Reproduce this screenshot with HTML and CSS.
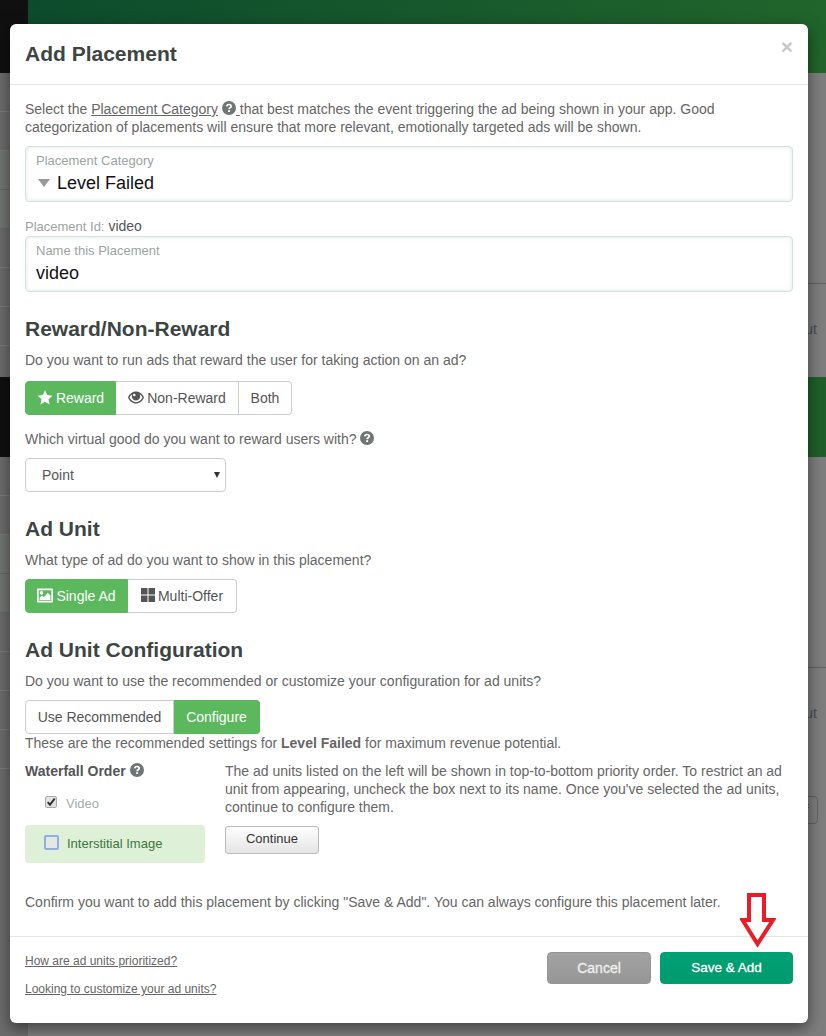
FILE: index.html
```html
<!DOCTYPE html>
<html lang="en">
<head>
<meta charset="utf-8">
<title>Add Placement</title>
<link rel="stylesheet" href="styles.css">
</head>
<body>
<div class="page">
  <div class="band band-top"><div class="band-side"></div><div class="band-main"></div></div>
  <div class="rows">
    <div class="side"><div class="r"></div><div class="r"></div><div class="r lite"></div><div class="r lite"></div><div class="r"></div><div class="r"></div><div class="r"></div></div>
    <div class="rowline"></div>
    <div class="row-text">ut</div>
  </div>
  <div class="band band-mid"><div class="band-side"></div><div class="band-main"></div></div>
  <div class="rows rows-two">
    <div class="side"><div class="r"></div><div class="r"></div><div class="r lite"></div><div class="r lite"></div><div class="r"></div><div class="r"></div><div class="r"></div><div class="r"></div></div>
    <div class="rowline"></div>
    <div class="row-text">ut</div>
    <div class="ghost-btn">f</div>
  </div>
</div>

<div class="modal">
  <header class="modal-head">
    <h1>Add Placement</h1>
    <span class="close">×</span>
  </header>
  <main class="modal-body">
    <p class="intro">Select the <a class="tip">Placement Category</a> <svg class="help" viewBox="0 0 14 14"><use href="#q"/></svg><a class="tip">&nbsp;</a>that best matches the event triggering the ad being shown in your app. Good categorization of placements will ensure that more relevant, emotionally targeted ads will be shown.</p>

    <div class="field field-cat">
      <label>Placement Category</label>
      <div class="value"><span class="tri"></span>Level Failed</div>
    </div>

    <div class="id-line"><span>Placement Id:</span> video</div>
    <div class="field">
      <label>Name this Placement</label>
      <div class="value">video</div>
    </div>

    <h2 class="h-reward">Reward/Non-Reward</h2>
    <p class="q">Do you want to run ads that reward the user for taking action on an ad?</p>
    <div class="group group-first">
      <button class="on w-reward"><svg class="ico" viewBox="0 0 16 16"><path d="M8 .2l2.300 5.200 5.700.6-4.300 3.800 1.200 5.600L8 12.500l-4.900 2.900 1.200-5.600L0 6l5.700-.6z"/></svg> Reward</button>
      <button class="w-non"><svg class="ico" viewBox="0 0 16 14"><path fill-rule="evenodd" d="M8 1c3.600 0 6.600 2.400 8 6-1.400 3.600-4.400 6-8 6S1.400 10.600 0 7c1.400-3.600 4.400-6 8-6zM1.500 7c1.200 2.700 3.700 4.700 6.500 4.700s5.300-2 6.500-4.700c-.7-1.500-1.700-2.700-3-3.500.4.700.7 1.500.7 2.300 0 2.400-1.900 4.300-4.200 4.300S3.800 8.200 3.800 5.800c0-.8.300-1.600.7-2.300-1.300.8-2.300 2-3 3.500zM6.300 3.200a1.300 1.300 0 1 0 0 2.600 1.300 1.300 0 0 0 0-2.600z"/></svg> Non-Reward</button>
      <button class="w-both">Both</button>
    </div>
    <p class="q q-good">Which virtual good do you want to reward users with? <svg class="help" viewBox="0 0 14 14"><use href="#q"/></svg></p>
    <div class="select-wrap"><select class="good"><option>Point</option></select></div>

    <h2 class="h-unit">Ad Unit</h2>
    <p class="q">What type of ad do you want to show in this placement?</p>
    <div class="group">
      <button class="on w-single"><svg class="ico" viewBox="0 0 16 14"><path fill-rule="evenodd" d="M.8 0h14.400a.8.800 0 0 1 .8.800v12.400a.8.800 0 0 1-.8.800H.8a.8.800 0 0 1-.8-.8V.8A.8.800 0 0 1 .8 0zm.9 1.700v10.600h12.600V1.700zM4.500 2.600a1.800 1.800 0 1 1 0 3.600 1.800 1.800 0 0 1 0-3.600zM2.600 11.400V9.200l2.400-2 1.800 1.500 4-4.500 2.600 2.800v4.400z"/></svg> Single Ad</button>
      <button class="w-multi"><svg class="ico ico-grid" viewBox="0 0 14 14"><path d="M0 0h6.500v6.500H0zM7.500 0H14v6.500H7.500zM0 7.500h6.500V14H0zM7.500 7.500H14V14H7.500z"/></svg> Multi-Offer</button>
    </div>

    <h2 class="h-config">Ad Unit Configuration</h2>
    <p class="q">Do you want to use the recommended or customize your configuration for ad units?</p>
    <div class="group">
      <button class="w-use">Use Recommended</button>
      <button class="on w-conf">Configure</button>
    </div>
    <p class="rec">These are the recommended settings for <b>Level Failed</b> for maximum revenue potential.</p>

    <div class="water">
      <div class="water-left">
        <div class="water-title"><b>Waterfall Order</b> <svg class="help" viewBox="0 0 14 14"><use href="#q"/></svg></div>
        <div class="unit unit-video">
          <span class="check"><svg viewBox="0 0 12 12"><path d="M2 6.200l2.800 3L10.500 1.800" fill="none" stroke="#333" stroke-width="2.400"/></svg></span>
          <span>Video</span>
        </div>
        <div class="unit unit-image">
          <span class="check check-focus"></span>
          <span>Interstitial Image</span>
        </div>
      </div>
      <div class="water-right">
        <p>The ad units listed on the left will be shown in top-to-bottom priority order. To restrict an ad unit from appearing, uncheck the box next to its name. Once you've selected the ad units, continue to configure them.</p>
        <button class="continue">Continue</button>
      </div>
    </div>

    <p class="confirm">Confirm you want to add this placement by clicking "Save &amp; Add". You can always configure this placement later.</p>
  </main>
  <footer class="modal-foot">
    <div class="links">
      <a>How are ad units prioritized?</a>
      <a>Looking to customize your ad units?</a>
    </div>
    <div class="actions">
      <button class="cancel">Cancel</button>
      <button class="save">Save &amp; Add</button>
    </div>
  </footer>
  <svg class="arrow" viewBox="0 0 36 56"><path d="M9 2h15v25h9L17.500 51 2.500 27H9z" fill="#fff" stroke="#ed1c24" stroke-width="4"/></svg>
</div>

<svg class="defs" width="0" height="0">
  <symbol id="q" viewBox="0 0 14 14">
    <circle cx="7" cy="7" r="7" fill="#6f7675"/>
    <path d="M4.800 5.400C4.900 4.100 5.800 3.500 7 3.500s2.200.7 2.200 1.800c0 1.500-2.100 1.500-2.100 3" fill="none" stroke="#fff" stroke-width="1.700"/>
    <rect x="6.100" y="9.200" width="2" height="1.800" fill="#fff"/>
  </symbol>
</svg>
</body>
</html>
```
FILE: styles.css
```css
* { box-sizing: border-box; }
html, body { margin: 0; height: 100%; }
body {
  background: #7e7e7e;
  font-family: "Liberation Sans", Arial, sans-serif;
  font-size: 14px;
  line-height: 18px;
  color: #666;
  overflow: hidden;
}

/* dimmed page behind the dialog */
.page { height: 1036px; display: flex; flex-direction: column; }
.band { display: flex; height: 73px; flex: none; }
.band-side { width: 28px; background: #101010; }
.band-main { flex: 1; background: linear-gradient(100deg, #0c4c2d, #22652b); }
.band-mid { height: 80px; }
.band-mid .band-main { background: #1f5f29; }
.rows { height: 304px; position: relative; flex: none; color: #444d55; }
.rows-two { height: 579px; }
.side { width: 28px; height: 100%; background: #6c6c6c; }
.r { height: 39px; border-bottom: 1px solid #7b7b7b; }
.r.lite { background: #727672; border-bottom-color: #666a66; }
.rowline { position: absolute; left: 808px; right: 0; top: 210px; border-top: 1px solid #636363; }
.row-text { position: absolute; right: 9px; top: 247px; }
.ghost-btn {
  position: absolute; left: 790px; top: 339px; width: 28px; height: 28px;
  border: 1px solid #636363; border-radius: 4px; color: #444d55;
  text-align: right; padding: 4px 8px 0 0;
}

/* dialog */
.modal {
  position: absolute; left: 10px; top: 24px; width: 798px; height: 999px;
  background: #fff; border-radius: 6px; box-shadow: 0 5px 15px rgba(0,0,0,.5);
  display: flex; flex-direction: column;
}
.modal-head {
  height: 61px; flex: none; border-bottom: 1px solid #e5e5e5;
  padding: 0 15px; position: relative;
}
.modal-head h1 { margin: 0; font-size: 21px; line-height: 60px; color: #3c4544; }
.close {
  position: absolute; right: 15px; top: 11px;
  font-size: 21px; line-height: 24px; font-weight: 700; color: #c8c8c8;
}
.modal-body { flex: 1; padding: 15px 15px 0; }
.modal-body p { margin: 0; }
.tip { color: #666; text-decoration: underline; }
.help { width: 14px; height: 14px; vertical-align: -1px; }
.defs { position: absolute; }

.field {
  height: 56px; border: 1px solid #d3e0dc; border-radius: 4px;
  padding: 5px 10px 0; box-shadow: inset 0 0 4px rgba(120,170,150,.25);
}
.field-cat { margin-top: 10px; }
.field label { display: block; font-size: 13px; line-height: 18px; color: #9aa3a1; }
.value { font-size: 18px; line-height: 24px; margin-top: 1px; color: #111; display: flex; align-items: center; }
.tri {
  width: 0; height: 0; margin: 0 7px 0 2px;
  border-left: 6px solid transparent; border-right: 6px solid transparent;
  border-top: 8px solid #999;
}
.id-line { margin-top: 15px; height: 18px; margin-bottom: 1px; color: #555; }
.id-line span { color: #9aa3a1; font-size: 13px; }

h2 { margin: 0; font-size: 21px; line-height: 24px; color: #3c4544; }
.h-reward, .h-unit, .h-config { margin-top: 25px; }
.modal-body .q { margin-top: 10px; }
.modal-body .q-good { margin-top: 15px; }

.group { display: flex; margin-top: 10px; height: 34px; }
.group-first { margin-top: 12px; }
.group button {
  font: inherit; color: #555; background: #fff; padding: 0;
  border: 1px solid #ccc; border-left-width: 0; height: 34px;
  display: flex; align-items: center; justify-content: center; gap: 3px;
}
.group button:first-child { border-left-width: 1px; border-radius: 4px 0 0 4px; }
.group button:last-child { border-radius: 0 4px 4px 0; }
.group button.on { background: #5cb85c; border-color: #5cb85c; color: #fff; }
.ico { width: 16px; height: 15px; fill: currentColor; flex: none; margin-top: -2px; }
.ico-grid { width: 14px; height: 14px; }
.w-reward { width: 91px; }
.w-non { width: 123px; }
.w-both { width: 53px; }
.w-single { width: 103px; }
.w-multi { width: 109px; }
.w-use { width: 149px; }
.w-conf { width: 86px; }

.select-wrap { position: relative; width: 201px; margin-top: 10px; }
.select-wrap::after {
  content: ""; position: absolute; right: 6px; top: 14px;
  border-left: 3.500px solid transparent; border-right: 3.500px solid transparent;
  border-top: 6px solid #333;
}
.good {
  display: block; width: 100%; height: 34px; appearance: none;
  font: inherit; color: #555; background: #fff;
  border: 1px solid #ccc; border-radius: 4px; padding: 0 16px;
}
.rec { line-height: 18px; }

.water { display: flex; margin-top: 10px; }
.water-left { width: 200px; flex: none; }
.water-title { height: 18px; color: #555; }
.unit { display: flex; align-items: center; gap: 9px; padding-left: 20px; width: 180px; font-size: 13px; }
.unit-video { height: 18px; margin-top: 15px; margin-bottom: -1px; color: #a3abab; }
.unit-image {
  height: 38px; margin-top: 13px; border-radius: 4px;
  background: #dff0d8; color: #3c763d;
}
.check {
  width: 12px; height: 12px; flex: none; display: block;
  border: 1px solid #aaa; border-radius: 2px; background: #e2e2e2;
  margin-top: -5px;
}
.check svg { display: block; width: 10px; height: 10px; }
.check-focus {
  width: 15px; height: 15px; border: 2px solid #8fb0de; background: #e4e8e4;
  margin: -3px -1px 0 -1px;
}
.water-right { flex: 1; }
.continue {
  display: block; margin-top: 10px; width: 94px; height: 28px; padding: 0 0 2px;
  font: inherit; font-size: 13px; color: #333; border: 1px solid #bbb; border-radius: 3px;
  background: linear-gradient(#fff, #e4e4e4);
}
.modal-body .confirm { margin-top: 30px; }

.modal-foot {
  height: 87px; flex: none; border-top: 1px solid #e5e5e5;
  padding: 15px 15px 0; display: flex; justify-content: space-between;
}
.links { display: flex; flex-direction: column; gap: 10px; font-size: 12px; }
.links a { color: #666; text-decoration: underline; line-height: 18px; }
.actions { display: flex; gap: 9px; height: 32px; }
.actions button {
  font: inherit; color: #fff; padding: 0;
  border-radius: 4px; height: 32px; -webkit-text-stroke: .3px currentColor;
}
.actions .cancel { width: 104px; border: 1px solid #969696; background: linear-gradient(#a3a3a3, #969696); color: #f0f0f0; }
.actions .save { width: 133px; border: 1px solid #009e73; background: linear-gradient(#00a275, #009a6e); font-size: 13.500px; }
.arrow { position: absolute; left: 730px; top: 869px; width: 36px; height: 56px; }
```
